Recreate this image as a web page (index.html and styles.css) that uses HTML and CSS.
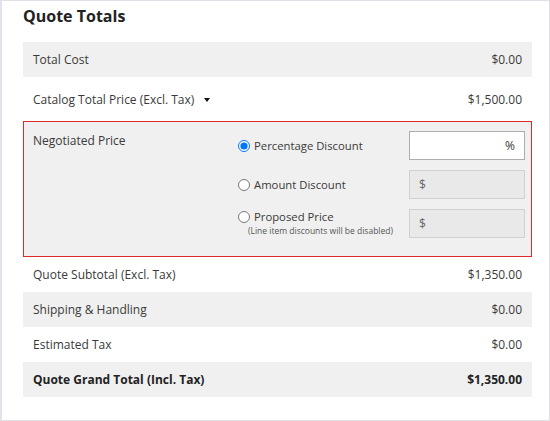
FILE: index.html
```html
<!DOCTYPE html>
<html>
<head>
<meta charset="utf-8">
<link rel="stylesheet" href="styles.css">
</head>
<body>
<div class="frame">
  <h2 class="title">Quote Totals</h2>
  <div class="totals">
    <div class="row shaded"><span>Total Cost</span><span>$0.00</span></div>
    <div class="row tall"><span class="with-caret">Catalog Total Price (Excl. Tax)<i class="caret"></i></span><span>$1,500.00</span></div>
    <div class="negotiated">
      <div class="neg-label">Negotiated Price</div>
      <label class="opt"><input type="radio" name="d" checked><span>Percentage Discount</span></label>
      <div class="field active"><span class="suffix">%</span></div>
      <label class="opt"><input type="radio" name="d"><span>Amount Discount</span></label>
      <div class="field disabled"><span class="prefix">$</span></div>
      <div class="opt-group">
        <label class="opt"><input type="radio" name="d"><span>Proposed Price</span></label>
        <div class="note">(Line item discounts will be disabled)</div>
      </div>
      <div class="field disabled"><span class="prefix">$</span></div>
    </div>
    <div class="row"><span>Quote Subtotal (Excl. Tax)</span><span>$1,350.00</span></div>
    <div class="row shaded"><span>Shipping &amp; Handling</span><span>$0.00</span></div>
    <div class="row"><span>Estimated Tax</span><span>$0.00</span></div>
    <div class="row shaded strong"><span>Quote Grand Total (Incl. Tax)</span><span>$1,350.00</span></div>
  </div>
</div>
</body>
</html>
```

FILE: styles.css
```css
html, body {
  margin: 0;
  padding: 0;
  background: #fff;
}
body {
  font-family: "Open Sans", "Liberation Sans", sans-serif;
  color: #3a3a3a;
  font-size: 12px;
}
.frame {
  box-sizing: border-box;
  width: 550px;
  height: 421px;
  border: 1px solid #e3dfe6;
  border-left: 2px solid #e6e0ea;
  padding: 4px 0 0 21px;
}
.title {
  margin: 0 0 15px 0;
  font-size: 16px;
  line-height: 22px;
  font-weight: 700;
  color: #222;
}
.totals {
  width: 509px;
}
.row {
  box-sizing: border-box;
  height: 35px;
  display: flex;
  align-items: center;
  justify-content: space-between;
  padding: 0 10px 0 10px;
  line-height: 17px;
}
.row.tall {
  height: 44px;
}
.row.after-box {
  height: 36px;
}
.shaded {
  background: #f0f0f0;
}
.strong {
  font-weight: 700;
  color: #222;
}
.with-caret {
  display: flex;
  align-items: center;
}
.caret {
  display: inline-block;
  width: 0;
  height: 0;
  border-top: 4px solid #111;
  border-left: 3px solid transparent;
  border-right: 3px solid transparent;
  margin-left: 10px;
  margin-top: 1px;
}
.negotiated {
  box-sizing: border-box;
  height: 136px;
  border: 1px solid #dd2a2a;
  background: #f0f0f0;
  display: grid;
  grid-template-columns: 205px 171px 116px;
  grid-template-rows: 29px 29px 29px;
  row-gap: 10px;
  padding: 9px 6px 0 9px;
}
.neg-label {
  grid-row: 1 / span 3;
  line-height: 17px;
  padding-top: 1px;
}
.opt {
  display: flex;
  align-items: center;
  line-height: 16px;
  font-size: 11.3px;
  white-space: nowrap;
}
.opt input {
  width: 12px;
  height: 12px;
  margin: 0 4px 0 0;
}
.opt-group {
  display: flex;
  flex-direction: column;
  justify-content: center;
  margin-top: -2px;
}
.note {
  font-size: 8.5px;
  line-height: 11px;
  color: #555;
  margin-left: 10px;
}
.field {
  box-sizing: border-box;
  height: 29px;
  display: flex;
  align-items: center;
  padding: 0 9px;
  font-size: 12px;
}
.field.active {
  background: #fff;
  border: 1px solid #adadad;
  justify-content: flex-end;
}
.field.disabled {
  background: #e9e9e9;
  border: 1px solid #d0d0d0;
  color: #666;
}
```
